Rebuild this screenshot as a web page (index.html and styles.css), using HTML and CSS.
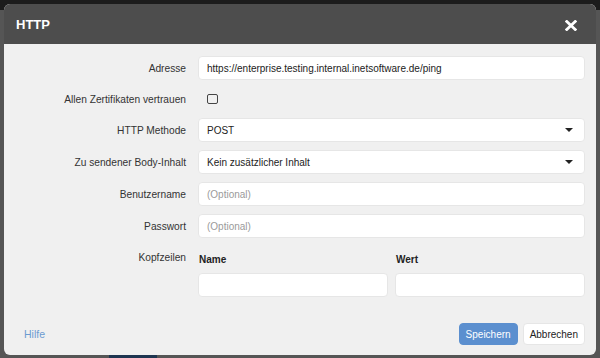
FILE: index.html
```html
<!DOCTYPE html>
<html lang="de">

<head>
  <meta charset="UTF-8">
  <meta name="viewport" content="width=device-width, initial-scale=1.0">
  <title>HTTP</title>
  <link rel="stylesheet" href="styles.css">
</head>

<body>

  <div class="topbar"></div>

  <div class="dialog">
    <div class="dialog-header">
      <h2>HTTP</h2>
      <span class="close">
        <svg width="12" height="11" viewBox="0 0 12 11">
          <path d="M1.8 1.5 L10.2 9.5 M10.2 1.5 L1.8 9.5" stroke="#fff" stroke-width="2.8" stroke-linecap="square" />
        </svg>
      </span>
    </div>

    <div class="dialog-body">
      <div class="row">
        <label>Adresse</label>
        <input class="field" type="text" value="https://enterprise.testing.internal.inetsoftware.de/ping">
      </div>
      <div class="row row-check">
        <label>Allen Zertifikaten vertrauen</label>
        <span class="checkbox"></span>
      </div>
      <div class="row">
        <label>HTTP Methode</label>
        <div class="field select">POST<span class="caret"></span></div>
      </div>
      <div class="row">
        <label>Zu sendener Body-Inhalt</label>
        <div class="field select">Kein zusätzlicher Inhalt<span class="caret"></span></div>
      </div>
      <div class="row">
        <label>Benutzername</label>
        <input class="field" type="text" placeholder="(Optional)">
      </div>
      <div class="row">
        <label>Passwort</label>
        <input class="field" type="text" placeholder="(Optional)">
      </div>
      <div class="row row-headers">
        <label>Kopfzeilen</label>
        <div class="headers">
          <div class="col">
            <b>Name</b>
            <input class="field" type="text">
          </div>
          <div class="col">
            <b>Wert</b>
            <input class="field" type="text">
          </div>
        </div>
      </div>
    </div>

    <div class="dialog-footer">
      <a class="help" href="#">Hilfe</a>
      <div class="buttons">
        <button class="btn btn-primary">Speichern</button>
        <button class="btn">Abbrechen</button>
      </div>
    </div>
  </div>

  <div class="bottom-tab"></div>

</body>

</html>
```

FILE: styles.css
```css
body {
  margin: 0;
  height: 358px;
  overflow: hidden;
  background-color: #555;
  font-family: "Liberation Sans", Arial, sans-serif;
  font-size: 10px;
  color: #333;
  position: relative;
}

.topbar {
  height: 10px;
  background-color: #1c1c1c;
}

.dialog {
  position: absolute;
  top: 4px;
  left: 4px;
  width: 592px;
  height: 351px;
  background-color: #f0f0f0;
  border-radius: 6px;
  overflow: hidden;
  display: flex;
  flex-direction: column;
  z-index: 1;
}

.dialog-header {
  height: 40px;
  flex-shrink: 0;
  background-color: #4d4d4d;
  display: flex;
  align-items: center;
  justify-content: space-between;
  padding: 0 19px 0 12px;
}

.dialog-header h2 {
  margin: 0;
  color: #fff;
  font-size: 13px;
  font-weight: bold;
}

.close {
  display: flex;
  margin-top: 2px;
}

.dialog-body {
  padding: 12px 11px 0 0;
}

.row {
  display: flex;
  align-items: center;
  margin-bottom: 8px;
}

.row label {
  width: 182px;
  text-align: right;
  padding-right: 12px;
  flex-shrink: 0;
  font-size: 10.2px;
  color: #333;
}

.field {
  box-sizing: border-box;
  flex: 1;
  height: 24px;
  border: 1px solid #e6e6e6;
  border-radius: 4px;
  background: #fff;
  padding: 0 8px;
  font-family: inherit;
  font-size: 10px;
  color: #222;
  outline: none;
}

.field::placeholder {
  color: #9a9a9a;
}

.select {
  display: flex;
  align-items: center;
  justify-content: space-between;
}

.caret {
  width: 0;
  height: 0;
  border-left: 4px solid transparent;
  border-right: 4px solid transparent;
  border-top: 4px solid #222;
  margin-right: 3px;
}

.row-check {
  height: 22px;
}

.checkbox {
  width: 9px;
  height: 8px;
  border: 1px solid #444;
  border-radius: 2px;
  margin-left: 9px;
}

.row-headers {
  align-items: flex-start;
}

.row-headers label {
  margin-top: 6px;
}

.headers {
  flex: 1;
  display: flex;
  gap: 7px;
}

.col {
  flex: 1;
  display: flex;
  flex-direction: column;
}

.col b {
  color: #222;
  line-height: 12px;
  margin: 8px 0 7px 1px;
}

.col .field {
  flex: none;
  width: 100%;
}

.dialog-footer {
  margin-top: auto;
  display: flex;
  align-items: center;
  justify-content: space-between;
  padding: 0 11px 10px 20px;
}

.help {
  color: #6b9bd1;
  font-size: 10.5px;
  text-decoration: none;
}

.buttons {
  display: flex;
  gap: 5px;
}

.btn {
  height: 22px;
  padding: 0 6px;
  border: 1px solid #e6e6e6;
  border-radius: 4px;
  background: #fff;
  font-family: inherit;
  font-size: 10px;
  color: #222;
}

.btn-primary {
  background-color: #5b8fcf;
  border-color: #5b8fcf;
  color: #fff;
}

.bottom-tab {
  position: absolute;
  left: 109px;
  bottom: 0;
  width: 48px;
  height: 6px;
  background-color: #1e3550;
}
```
